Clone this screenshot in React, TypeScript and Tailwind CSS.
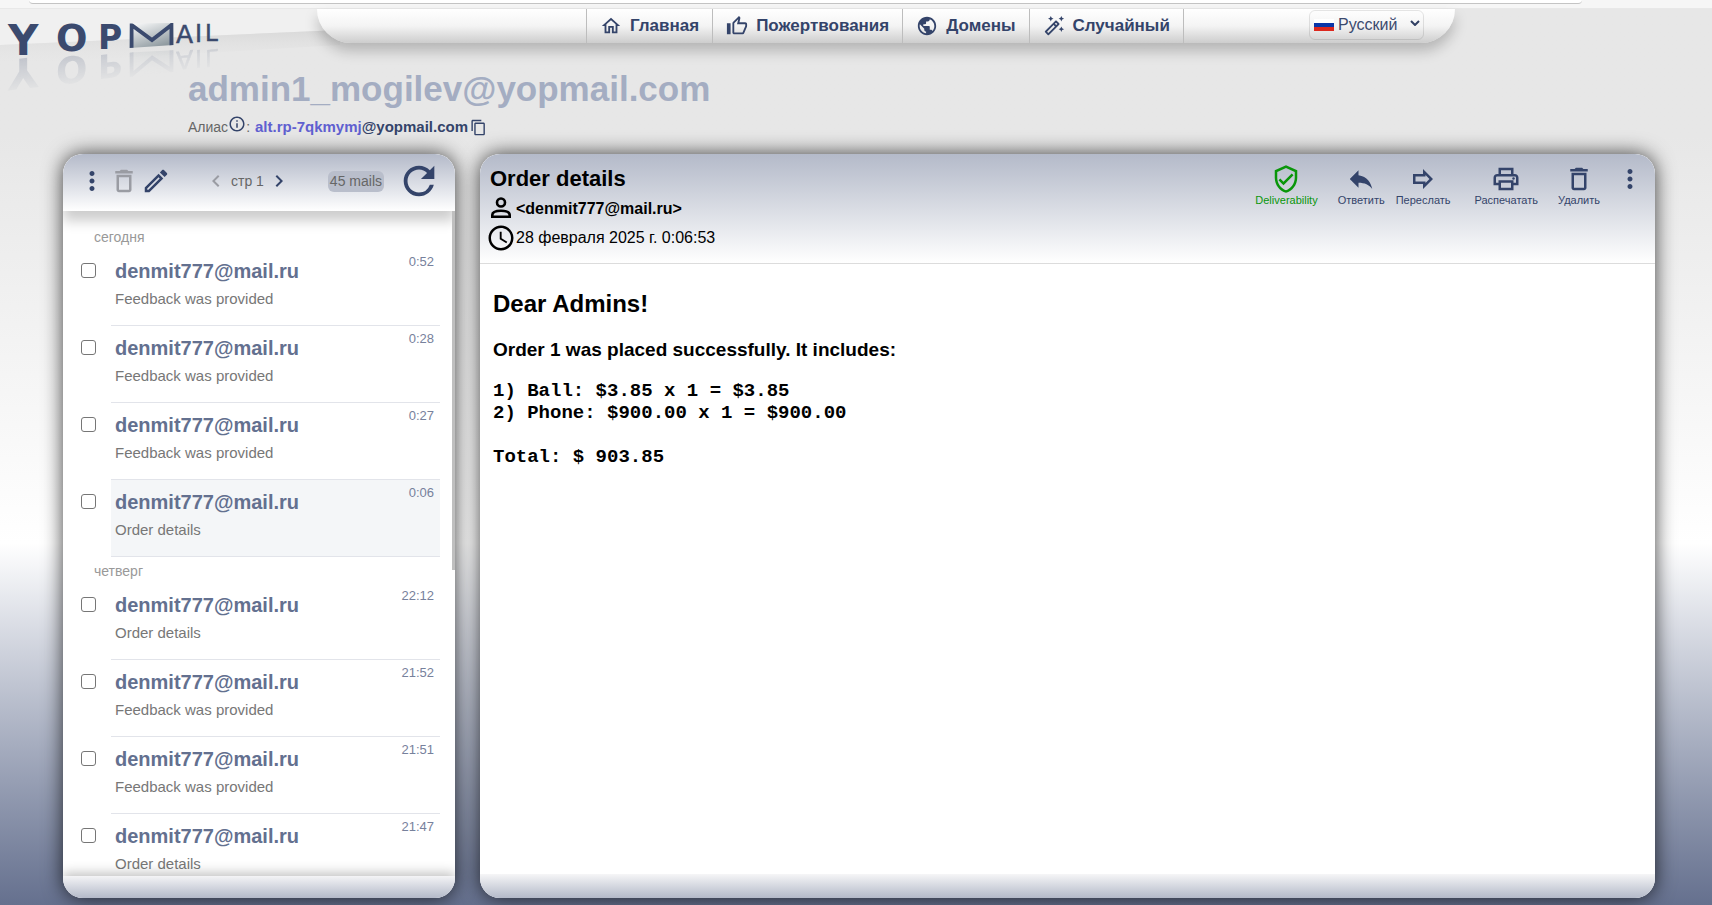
import type { ReactNode } from "react";
import {
  MdAccessTime,
  MdChevronLeft,
  MdChevronRight,
  MdContentCopy,
  MdDeleteOutline,
  MdInfoOutline,
  MdMoreVert,
  MdOutlineAutoFixHigh,
  MdOutlineEdit,
  MdOutlineForward,
  MdOutlineHome,
  MdOutlinePrint,
  MdOutlineThumbUp,
  MdOutlineVerifiedUser,
  MdPublic,
  MdRefresh,
  MdReply,
} from "react-icons/md";

type Mail = { id: number; from: string; subject: string; time: string; active?: boolean };
type Day = { label: string; mails: Mail[] };

const sender = "denmit777@mail.ru";

const days: Day[] = [
  {
    label: "сегодня",
    mails: [
      { id: 1, from: sender, subject: "Feedback was provided", time: "0:52" },
      { id: 2, from: sender, subject: "Feedback was provided", time: "0:28" },
      { id: 3, from: sender, subject: "Feedback was provided", time: "0:27" },
      { id: 4, from: sender, subject: "Order details", time: "0:06", active: true },
    ],
  },
  {
    label: "четверг",
    mails: [
      { id: 5, from: sender, subject: "Order details", time: "22:12" },
      { id: 6, from: sender, subject: "Feedback was provided", time: "21:52" },
      { id: 7, from: sender, subject: "Feedback was provided", time: "21:51" },
      { id: 8, from: sender, subject: "Order details", time: "21:47" },
    ],
  },
];

function Envelope() {
  return (
    <g clipPath="url(#envelope)">
      <path d="M129 14 H174 V39 H129 Z" fill="url(#paper)" />
      <path d="M131.5 42 V16 L152 31 L171.5 16 V42" fill="none" stroke="#3b4a6e" strokeWidth="4" />
    </g>
  );
}

function Letters() {
  return (
    <g fill="#3b4a6e" fontFamily="'DejaVu Sans', sans-serif">
      <g fontWeight="700">
        <text x="8" y="46" fontSize="42">Y</text>
        <text x="56" y="42" fontSize="37">O</text>
        <text x="98" y="40" fontSize="33">P</text>
      </g>
      <Envelope />
      <g stroke="#3b4a6e" strokeWidth="0.5">
        <text x="176" y="34" fontSize="25">A</text>
        <text x="195" y="33" fontSize="24">I</text>
        <text x="205" y="32" fontSize="23">L</text>
      </g>
    </g>
  );
}

function Logo() {
  return (
    <svg width="340" height="100" viewBox="0 0 340 100" className="block max-w-none" role="img" aria-label="YOPmail">
      <defs>
        <linearGradient id="paper" x1="0" y1="0" x2="0.6" y2="1">
          <stop offset="0" stopColor="#ffffff" />
          <stop offset="1" stopColor="#8f9aa0" />
        </linearGradient>
        <clipPath id="envelope">
          <path d="M129.5 14.5 L173.5 14 V36 L129.5 39 Z" />
        </clipPath>
        <linearGradient id="floor" x1="0" y1="0" x2="0" y2="1">
          <stop offset="0" stopColor="#d9d9d9" />
          <stop offset="1" stopColor="#e7e7e7" stopOpacity="0" />
        </linearGradient>
        <linearGradient id="fade" x1="0" y1="0" x2="0" y2="1">
          <stop offset="0.2" stopColor="#000" />
          <stop offset="1" stopColor="#777" />
        </linearGradient>
        <mask id="reflection" maskUnits="userSpaceOnUse" x="0" y="0" width="230" height="50">
          <rect width="230" height="50" fill="url(#fade)" />
        </mask>
      </defs>
      <path d="M0 0 H340 V21 L0 36 Z" fill="#f0f0f0" />
      <path d="M0 36 L340 21 V36 L0 56 Z" fill="url(#floor)" />
      <Letters />
      <g transform="matrix(1 -0.12 0 -1 0 98)" opacity="0.5" aria-hidden="true">
        <g mask="url(#reflection)">
          <Letters />
        </g>
      </g>
    </svg>
  );
}

function NavLink({ icon, children }: { icon: ReactNode; children: ReactNode }) {
  return (
    <a href="#" className="flex items-center gap-2 border-l border-[#bdbdbd] px-[13px] text-[17px] leading-[34px] font-bold whitespace-nowrap last:border-r">
      <span className="flex w-[22px] justify-center">{icon}</span>
      {children}
    </a>
  );
}

function Header() {
  return (
    <header className="flex h-[145px] shrink-0">
      <a href="#" className="w-[188px] shrink-0">
        <Logo />
      </a>
      <div className="min-w-0 flex-1">
        <div className="mr-[257px] ml-[129px] flex h-[34px] rounded-b-[34px] bg-linear-to-b from-white via-[#f4f4f4] via-50% to-[#cdcdcd] shadow-[0_8px_14px_rgba(0,0,0,0.22)]">
          <nav className="ml-[269px] flex">
            <NavLink icon={<MdOutlineHome size={22} />}>Главная</NavLink>
            <NavLink icon={<MdOutlineThumbUp size={22} />}>Пожертвования</NavLink>
            <NavLink icon={<MdPublic size={22} />}>Домены</NavLink>
            <NavLink icon={<MdOutlineAutoFixHigh size={22} />}>Случайный</NavLink>
          </nav>
          <label className="mt-px mr-[31px] ml-auto flex h-[30px] w-[115px] items-center rounded-md border border-black/10 pl-1">
            <span className="mr-1 flex h-[13px] w-5 flex-col">
              <span className="flex-1 bg-white" />
              <span className="flex-1 bg-[#0a36a8]" />
              <span className="flex-1 bg-[#dc281e]" />
            </span>
            <select aria-label="Язык" className="w-[66px] appearance-none text-base text-[#3b4a6e]">
              <option>Русский</option>
            </select>
            <svg width="10" height="6" viewBox="0 0 10 6" className="mb-1 ml-1.5" fill="none" stroke="#303f63" strokeWidth="2">
              <path d="M1 1 L5 5 L9 1" />
            </svg>
          </label>
        </div>
        <h1 className="mt-[26px] text-[35px] leading-10 font-bold text-[#a4adc2]">admin1_mogilev@yopmail.com</h1>
        <div className="mt-2 flex h-5 items-center text-[15px] leading-5">
          <span className="text-sm text-[#666]">Алиас</span>
          <button aria-label="Об алиасе" className="mb-1.5">
            <MdInfoOutline size={18} />
          </button>
          <span className="mr-[5px] text-sm text-[#666]">:</span>
          <span className="font-bold text-[#6060d0]">alt.rp-7qkmymj</span>
          <span className="font-bold">@yopmail.com</span>
          <button aria-label="Копировать" className="ml-0.5">
            <MdContentCopy size={17} />
          </button>
        </div>
      </div>
    </header>
  );
}

function MailRow({ mail }: { mail: Mail }) {
  return (
    <li className="flex h-[77px]">
      <input
        type="checkbox"
        aria-label={`${mail.from}, ${mail.subject}, ${mail.time}`}
        className="mt-3.5 size-[15px] shrink-0 appearance-none rounded-[3px] border border-[#767676] bg-white"
      />
      <button
        className={`ml-[15px] flex flex-1 items-start border-b border-[#e2e4ea] pr-1.5 pl-1 text-left ${mail.active ? "bg-[#f4f6f8]" : ""}`}
      >
        <span className="flex-1 pt-2.5">
          <span className="block text-xl leading-6 font-bold text-[#63708f]">{mail.from}</span>
          <span className="mt-1.5 block text-[15px] leading-5 text-[#777]">{mail.subject}</span>
        </span>
        <span className="pt-[3px] text-[13px] leading-5 text-[#77819c]">{mail.time}</span>
      </button>
    </li>
  );
}

function Inbox() {
  return (
    <aside className="flex w-[392px] shrink-0 flex-col overflow-hidden rounded-[20px] bg-white">
      <div className="z-10 flex h-[57px] shrink-0 items-center bg-linear-to-b from-[#b4bac9] to-white pr-[13px] pb-[3px] pl-3.5 shadow-[0_10px_12px_rgba(0,0,0,0.2)]">
        <button aria-label="Меню"><MdMoreVert size={30} /></button>
        <button aria-label="Удалить выбранные" className="ml-0.5 text-[#9a9ca3]"><MdDeleteOutline size={30} /></button>
        <button aria-label="Написать" className="ml-0.5"><MdOutlineEdit size={30} /></button>
        <div className="ml-[33px] flex items-center text-[#666]">
          <button aria-label="Назад" className="text-[#9a9ca3]"><MdChevronLeft size={24} /></button>
          <span className="mx-[3px] text-sm">стр 1</span>
          <button aria-label="Вперёд" className="text-[#34446a]"><MdChevronRight size={24} /></button>
        </div>
        <span className="ml-auto rounded-md bg-[#b9becb] px-0.5 text-sm leading-[21px] text-[#666]">45 mails</span>
        <button aria-label="Обновить" className="ml-3"><MdRefresh size={46} /></button>
      </div>
      <div className="flex min-h-0 flex-1 overflow-hidden">
        <div className="flex-1 pt-3 pr-3 pl-[18px]">
          {days.map((day) => (
            <section key={day.label}>
              <h2 className="h-[26px] pl-[13px] text-sm leading-[29px] text-[#999]">{day.label}</h2>
              <ul>
                {day.mails.map((mail) => (
                  <MailRow key={mail.id} mail={mail} />
                ))}
              </ul>
            </section>
          ))}
        </div>
        <div className="z-20 h-[54%] w-[3px] bg-[#bfbfbf]" />
      </div>
      <div className="z-10 h-[22px] shrink-0 bg-linear-to-b from-[#f4f4f6] to-[#b4bac9] shadow-[0_-3px_12px_rgba(0,0,0,0.25)]" />
    </aside>
  );
}

function PersonIcon() {
  return (
    <svg width="30" height="30" viewBox="0 0 30 30" fill="none" stroke="currentColor" strokeWidth="2.6" aria-hidden="true">
      <circle cx="15" cy="9.5" r="4" />
      <path d="M6.3 23.7 V22 C6.3 18.9 11 17.8 15 17.8 S23.7 18.9 23.7 22 V23.7 Z" />
    </svg>
  );
}

function Action({ icon, label, className }: { icon: ReactNode; label: string; className?: string }) {
  return (
    <button className={`flex flex-col items-center text-[11px] leading-3 ${className ?? ""}`}>
      {icon}
      {label}
    </button>
  );
}

function Message() {
  return (
    <main className="flex min-w-0 flex-1 flex-col overflow-hidden rounded-[20px] bg-white text-black">
      <div className="flex h-[110px] shrink-0 border-b border-[#dcdcdc] bg-linear-to-b from-[#b4bac9] to-white">
        <div className="flex-1 pt-2.5 pl-1.5">
          <h2 className="pl-1 text-[22px] leading-[29px] font-bold">Order details</h2>
          <div className="flex items-center text-base leading-[29px] font-bold">
            <PersonIcon />
            &lt;denmit777@mail.ru&gt;
          </div>
          <div className="flex items-center text-base leading-[30px]">
            <MdAccessTime size={30} />
            28 февраля 2025 г. 0:06:53
          </div>
        </div>
        <div className="flex items-start pt-2.5 pr-2.5 text-[#34446a]">
          <Action icon={<MdOutlineVerifiedUser size={30} />} label="Deliverability" className="text-[#0a960a]" />
          <Action icon={<MdReply size={30} />} label="Ответить" className="ml-5" />
          <Action icon={<MdOutlineForward size={30} />} label="Переслать" className="ml-[11px]" />
          <Action icon={<MdOutlinePrint size={30} />} label="Распечатать" className="ml-6" />
          <Action icon={<MdDeleteOutline size={30} />} label="Удалить" className="ml-5" />
          <button aria-label="Ещё" className="ml-[15px]"><MdMoreVert size={30} /></button>
        </div>
      </div>
      <article className="flex-1 px-[13px] pt-[26px]">
        <h3 className="text-2xl leading-7 font-bold">Dear Admins!</h3>
        <p className="mt-5 text-[19px] leading-6 font-bold">Order 1 was placed successfully. It includes:</p>
        <pre className="mt-[18px] font-['Liberation_Mono',monospace] text-[19px] leading-[22px] font-bold">
          {"1) Ball: $3.85 x 1 = $3.85\n2) Phone: $900.00 x 1 = $900.00\n\nTotal: $ 903.85"}
        </pre>
      </article>
      <div className="h-6 shrink-0 bg-linear-to-b from-[#f6f6f7] to-[#b4bac9]" />
    </main>
  );
}

export default function App() {
  return (
    <div className="flex h-screen flex-col overflow-hidden bg-linear-to-b from-[#e7e7e7] from-15% via-white via-60% to-[#65708e] font-['Liberation_Sans',Arial,sans-serif] text-[#34446a]">
      <div className="h-[9px] shrink-0 border-b border-[#e8e8e8] bg-[#f6f6f6] pr-[130px] pl-[29px]">
        <div className="h-1 rounded-b-[14px] border-b border-[#c4c4c4] bg-white" />
      </div>
      <Header />
      <div className="flex min-h-0 flex-1 gap-[25px] pr-[57px] pb-[7px] pl-[63px]">
        <div className="flex rounded-[20px] shadow-[0_0_20px_rgba(0,0,0,0.75)]">
          <Inbox />
        </div>
        <div className="flex min-w-0 flex-1 rounded-[20px] shadow-[0_0_20px_rgba(0,0,0,0.75)]">
          <Message />
        </div>
      </div>
    </div>
  );
}
